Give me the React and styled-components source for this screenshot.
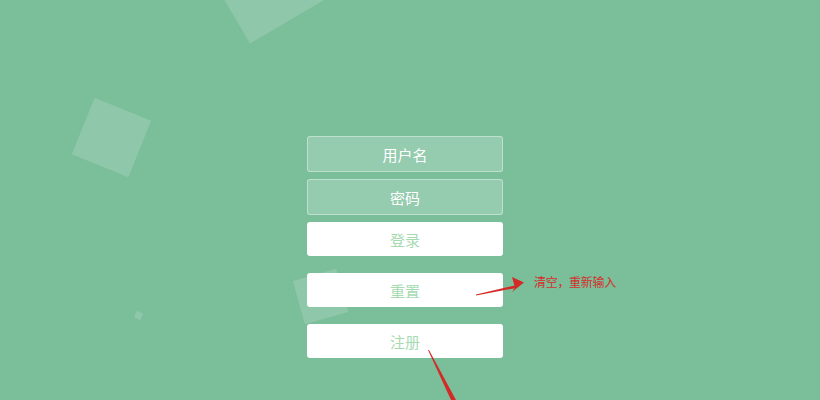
import React from "react";
import styled, { createGlobalStyle } from "styled-components";

const Global = createGlobalStyle`
  html, body { margin: 0; padding: 0; }
  body {
    background: #7bbe9a;
    font-family: "Noto Sans CJK SC", "Noto Sans", sans-serif;
    overflow: hidden;
  }
`;

const Page = styled.div`
  position: relative;
  width: 820px;
  height: 400px;
  overflow: hidden;
  background: #7bbe9a;
`;

const Bubble = styled.div`
  position: absolute;
  background: rgba(255, 255, 255, 0.15);
  z-index: 0;
`;

const Form = styled.form`
  position: relative;
  z-index: 1;
  display: flex;
  flex-direction: column;
  width: 196px;
  padding: 136px 0 0 307px;
  margin: 0;
`;

const Field = styled.input`
  box-sizing: border-box;
  height: 36px;
  width: 100%;
  margin: 0 0 7px 0;
  padding: 0;
  border: 1px solid rgba(255, 255, 255, 0.4);
  border-radius: 3px;
  background: rgba(255, 255, 255, 0.2);
  color: #fff;
  text-align: center;
  font-family: "Noto Sans CJK SC", sans-serif;
  font-size: 15px;
  outline: none;
  &::placeholder { color: #fff; opacity: 1; }
`;

const Button = styled.button`
  box-sizing: border-box;
  height: 34px;
  width: 100%;
  margin: 0 0 ${(p) => p.$gap}px 0;
  padding: 0;
  border: 0;
  border-radius: 3px;
  background: #fff;
  color: #a6dbb2;
  font-family: "Noto Sans CJK SC", sans-serif;
  font-size: 15px;
  cursor: pointer;
`;

const Overlay = styled.svg`
  position: absolute;
  left: 0;
  top: 0;
  z-index: 2;
  pointer-events: none;
`;

const Note = styled.span`
  position: absolute;
  left: 534px;
  top: 273px;
  z-index: 2;
  font-family: "Noto Sans CJK SC", sans-serif;
  font-size: 12px;
  line-height: 18px;
  letter-spacing: -0.3px;
  color: #d3302c;
  white-space: nowrap;
`;

const bubbles = [
  { l: 221, t: -63, s: 90, r: -30.5 },
  { l: 81, t: 106.5, s: 61, r: 22 },
  { l: 297.5, t: 274, s: 45, r: -15.6 },
  { l: 135, t: 311.5, s: 7, r: 20 },
];

export default function App() {
  return (
    <>
      <Global />
      <Page>
        {bubbles.map((b, i) => (
          <Bubble
            key={i}
            style={{
              left: b.l,
              top: b.t,
              width: b.s,
              height: b.s,
              transform: `rotate(${b.r}deg)`,
            }}
          />
        ))}
        <Form onSubmit={(e) => e.preventDefault()}>
          <Field type="text" placeholder="用户名" />
          <Field type="password" placeholder="密码" />
          <Button type="button" $gap={17}>登录</Button>
          <Button type="button" $gap={17}>重置</Button>
          <Button type="button" $gap={0}>注册</Button>
        </Form>
        <Overlay width="820" height="400" viewBox="0 0 820 400">
          <polygon points="476,294.6 515,285.4 516,288 476,295.4" fill="#d42a27" />
          <polygon points="524,282.5 512,277 515,287.5 512,292" fill="#d42a27" />
          <polygon points="428,350 429,350 456,400 451,400" fill="#d42a27" />
        </Overlay>
        <Note>清空，重新输入</Note>
      </Page>
    </>
  );
}
